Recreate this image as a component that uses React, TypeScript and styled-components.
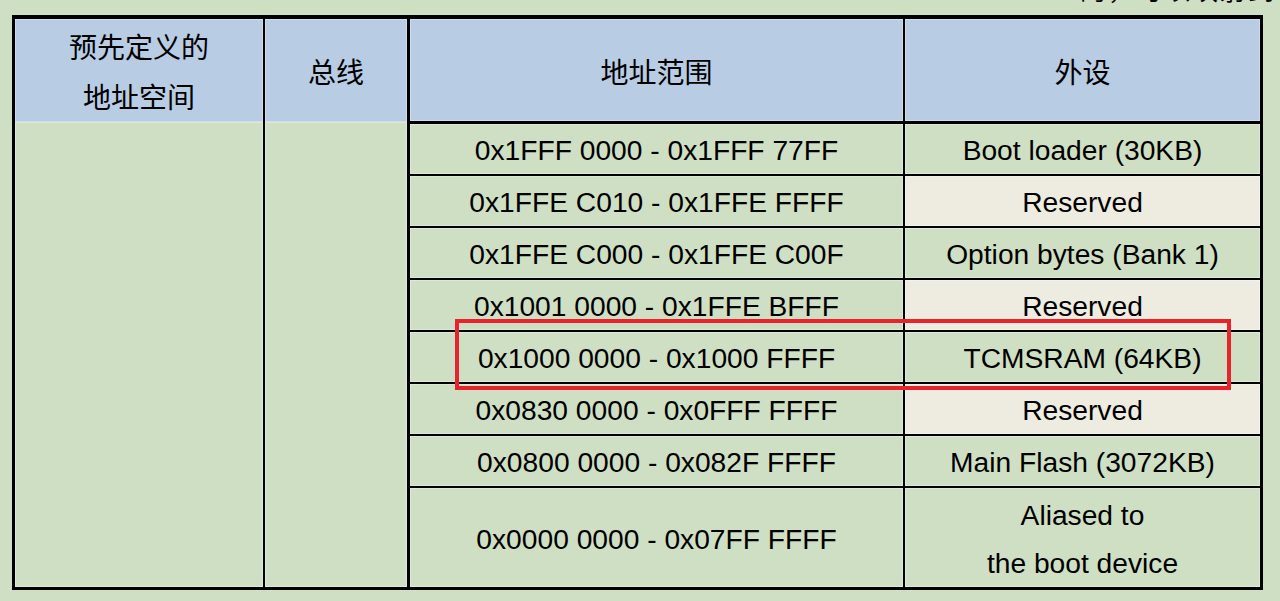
import React from 'react';
import styled, { createGlobalStyle } from 'styled-components';

const Global = createGlobalStyle`
  html, body { margin: 0; padding: 0; background: #cfdfc4; }
  body {
    font-family: "Liberation Sans", Arial, "Noto Sans CJK SC", sans-serif;
    color: #000;
  }
`;

const GREEN = '#cfdfc4';
const BLUE = '#b8cce4';
const BEIGE = '#eeece1';

const Page = styled.div`
  width: 1280px;
  height: 601px;
  overflow: hidden;
  background: ${GREEN};
  padding-left: 12px;
  box-sizing: border-box;
`;

const Caption = styled.div`
  height: 15px;
  overflow: hidden;
  font-family: "Noto Sans CJK SC", sans-serif;
  font-size: 26px;
  line-height: 26px;
  text-align: right;
  padding-right: 4px;
`;

const CaptionText = styled.div`
  margin-top: -24px;
  letter-spacing: 2px;
`;

const Table = styled.div`
  position: relative;
  display: flex;
  width: 1251px;
  height: 575px;
  box-sizing: border-box;
  border: 3px solid #000;
  border-top-width: 4px;
`;

const SideColumn = styled.div<{ $w: number; $rule: number }>`
  width: ${(p) => p.$w}px;
  flex: none;
  box-sizing: border-box;
  border-right: ${(p) => p.$rule}px solid #000;
  display: flex;
  flex-direction: column;
  background: ${GREEN};
`;

const SideHeader = styled.div`
  height: 103px;
  flex: none;
  background: ${BLUE};
  display: flex;
  align-items: center;
  justify-content: center;
  text-align: center;
  font-family: "Noto Sans CJK SC", sans-serif;
  font-size: 28px;
  line-height: 50px;
  padding-top: 1px;
  box-sizing: border-box;
  box-shadow: inset 0 0 0 1px rgba(255, 255, 255, 0.3);
`;

const SideBody = styled.div`
  flex: 1;
  box-shadow: inset 0 0 0 1px rgba(255, 255, 255, 0.3);
`;

const Main = styled.div`
  flex: 1;
  display: flex;
  flex-direction: column;
`;

const Row = styled.div<{ $h?: number; $header?: boolean; $last?: boolean }>`
  display: flex;
  flex: ${(p) => (p.$last ? '1' : 'none')};
  height: ${(p) => (p.$last ? 'auto' : `${p.$h ?? 50}px`)};
  border-bottom: ${(p) => (p.$last ? 'none' : p.$header ? '3px solid #000' : '2px solid #000')};
`;

const Cell = styled.div<{ $bg: string; $addr?: boolean; $cjk?: boolean }>`
  display: flex;
  align-items: center;
  justify-content: center;
  text-align: center;
  background: ${(p) => p.$bg};
  box-sizing: border-box;
  padding-top: ${(p) => (p.$cjk ? '1px' : '2px')};
  ${(p) => (p.$addr ? 'width: 495px; border-right: 2px solid #000;' : 'flex: 1;')}
  font-family: ${(p) =>
    p.$cjk ? '"Noto Sans CJK SC", sans-serif' : '"Liberation Sans", Arial, sans-serif'};
  font-size: ${(p) => (p.$cjk ? '28px' : '28.2px')};
  line-height: 48px;
  white-space: pre-line;
  box-shadow: inset 0 0 0 1px rgba(255, 255, 255, 0.3);
`;

const Highlight = styled.div`
  position: absolute;
  left: 440px;
  top: 300px;
  width: 776px;
  height: 71px;
  box-sizing: border-box;
  border: 4px solid #e8232b;
  pointer-events: none;
`;

type Entry = { range: string; periph: string; reserved?: boolean };

const rows: Entry[] = [
  { range: '0x1FFF 0000 - 0x1FFF 77FF', periph: 'Boot loader (30KB)' },
  { range: '0x1FFE C010 - 0x1FFE FFFF', periph: 'Reserved', reserved: true },
  { range: '0x1FFE C000 - 0x1FFE C00F', periph: 'Option bytes (Bank 1)' },
  { range: '0x1001 0000 - 0x1FFE BFFF', periph: 'Reserved', reserved: true },
  { range: '0x1000 0000 - 0x1000 FFFF', periph: 'TCMSRAM (64KB)' },
  { range: '0x0830 0000 - 0x0FFF FFFF', periph: 'Reserved', reserved: true },
  { range: '0x0800 0000 - 0x082F FFFF', periph: 'Main Flash (3072KB)' },
  { range: '0x0000 0000 - 0x07FF FFFF', periph: 'Aliased to\nthe boot device' },
];

export default function App() {
  return (
    <>
      <Global />
      <Page>
        <Caption>
          <CaptionText>的，可以映射到</CaptionText>
        </Caption>
        <Table>
          <SideColumn $w={250} $rule={2}>
            <SideHeader>
              预先定义的
              <br />
              地址空间
            </SideHeader>
            <SideBody />
          </SideColumn>
          <SideColumn $w={145} $rule={3}>
            <SideHeader>总线</SideHeader>
            <SideBody />
          </SideColumn>
          <Main>
            <Row $h={102} $header>
              <Cell $bg={BLUE} $addr $cjk>
                地址范围
              </Cell>
              <Cell $bg={BLUE} $cjk>
                外设
              </Cell>
            </Row>
            {rows.map((r, i) => (
              <Row key={r.range} $last={i === rows.length - 1}>
                <Cell $bg={GREEN} $addr>
                  {r.range}
                </Cell>
                <Cell $bg={r.reserved ? BEIGE : GREEN}>{r.periph}</Cell>
              </Row>
            ))}
          </Main>
          <Highlight />
        </Table>
      </Page>
    </>
  );
}
